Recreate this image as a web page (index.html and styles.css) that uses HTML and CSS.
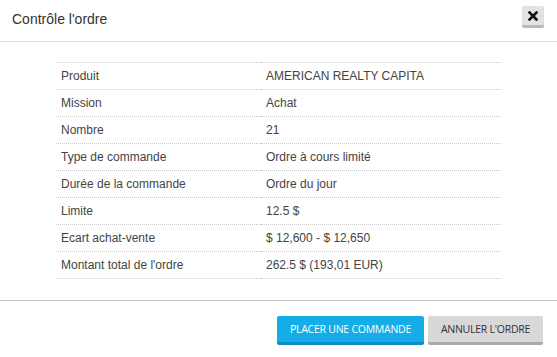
FILE: index.html
```html
<!DOCTYPE html>
<html lang="fr">
<head>
    <meta charset="UTF-8">
    <title>Contrôle l'ordre</title>
    <link rel="stylesheet" href="styles.css">
</head>
<body>
    <div class="modal">
        <header class="modal-header">
            <h1>Contrôle l'ordre</h1>
            <button class="close-btn" title="Fermer">
                <svg width="10" height="10" viewBox="0 0 10 10">
                    <path d="M1.5 1.5 L8.5 8.5 M8.5 1.5 L1.5 8.5" stroke="#111" stroke-width="2.6" stroke-linecap="square"/>
                </svg>
            </button>
        </header>

        <!-- Order summary -->
        <section class="modal-body">
            <table class="order-table">
                <tbody>
                    <tr><td>Produit</td><td>AMERICAN REALTY CAPITA</td></tr>
                    <tr><td>Mission</td><td>Achat</td></tr>
                    <tr><td>Nombre</td><td>21</td></tr>
                    <tr><td>Type de commande</td><td>Ordre à cours limité</td></tr>
                    <tr><td>Durée de la commande</td><td>Ordre du jour</td></tr>
                    <tr><td>Limite</td><td>12.5 $</td></tr>
                    <tr><td>Ecart achat-vente</td><td>$ 12,600 - $ 12,650</td></tr>
                    <tr><td>Montant total de l'ordre</td><td>262.5 $ (193,01 EUR)</td></tr>
                </tbody>
            </table>
        </section>

        <footer class="modal-footer">
            <button class="btn btn-primary">PLACER UNE COMMANDE</button>
            <button class="btn btn-cancel">ANNULER L'ORDRE</button>
        </footer>
    </div>
</body>
</html>
```

FILE: styles.css
```css
body {
    margin: 0;
    padding: 0;
    background-color: #fff;
    font-family: "Liberation Sans", Arial, sans-serif;
    color: #444;
}
.modal {
    width: 557px;
    height: 357px;
    background: #fff;
}
.modal-header {
    display: flex;
    align-items: center;
    justify-content: space-between;
    height: 41px;
    padding: 0 13px 0 12px;
    border-bottom: 1px solid #dcdcdc;
}
.modal-header h1 {
    margin: 0;
    font-size: 14px;
    font-weight: normal;
    color: #333;
    padding-bottom: 3px;
}
.close-btn {
    display: flex;
    align-items: center;
    justify-content: center;
    width: 22px;
    height: 22px;
    padding: 0;
    margin-bottom: 7px;
    border: none;
    border-bottom: 3px solid #b9b9b9;
    border-radius: 2px;
    background-color: #e2e2e2;
    cursor: pointer;
}
.modal-body {
    padding: 20px 56px 21px;
}
.order-table {
    width: 100%;
    border-collapse: collapse;
    font-size: 12px;
}
.order-table td {
    height: 26px;
    padding: 0 5px;
    border-top: 1px dotted #c8c8c8;
    border-bottom: 1px dotted #c8c8c8;
    vertical-align: middle;
}
.order-table td:first-child {
    width: 195px;
}
.modal-footer {
    display: flex;
    justify-content: flex-end;
    gap: 4px;
    padding: 15px 14px 0;
    border-top: 1px solid #c4c4c4;
}
.btn {
    height: 29px;
    padding: 0;
    border: none;
    border-radius: 2px;
    font-family: "Open Sans", sans-serif;
    font-size: 10.5px;
    white-space: nowrap;
    letter-spacing: -0.25px;
    cursor: pointer;
}
.btn-primary {
    width: 147px;
    background-color: #14ade8;
    border-bottom: 3px solid #0b8fc3;
    color: #fff;
}
.btn-cancel {
    width: 115px;
    background-color: #d8d8d8;
    border-bottom: 3px solid #ababab;
    color: #333;
}
```
